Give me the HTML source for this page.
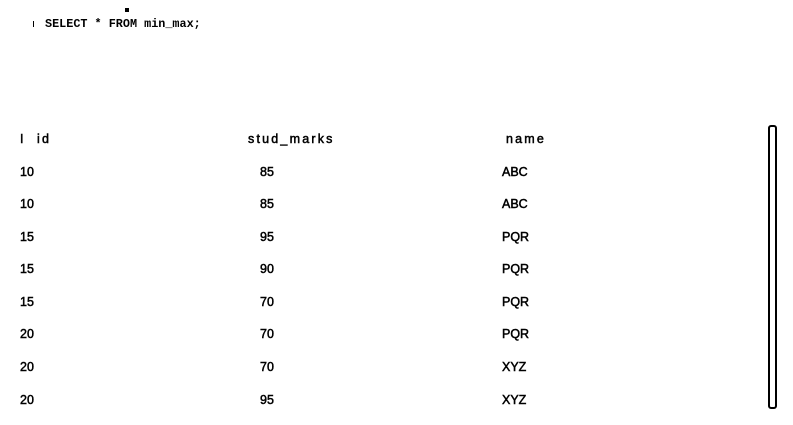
<!DOCTYPE html>
<html><head><style>
body{margin:0;width:793px;height:425px;background:#fff;position:relative;overflow:hidden;font-family:"Liberation Sans",sans-serif;color:#000}
.t{position:absolute;font-size:12.5px;line-height:14px;white-space:nowrap;-webkit-text-stroke:0.5px}
.h{letter-spacing:2.2px;font-size:12.5px}
.sql{position:absolute;left:45px;top:17px;font-family:"Liberation Mono",monospace;font-size:11.8px;font-weight:bold}
.bar{position:absolute;left:33px;top:21px;width:1px;height:6px;background:#000}
.dot{position:absolute;left:125px;top:8px;width:4px;height:4px;background:#000}
.sb{position:absolute;left:768px;top:125px;width:5px;height:280px;border:2px solid #000;border-radius:3px}
</style></head><body>
<div class="dot"></div>
<div class="bar"></div>
<div class="sql">SELECT * FROM min_max;</div>
<div class="t h" style="left:20px;top:132px">I</div><div class="t h" style="left:37px;top:132px">id</div>
<div class="t h" style="left:248px;top:132px">stud_marks</div>
<div class="t h" style="left:506px;top:132px">name</div>
<div class="t" style="left:20px;top:165px">10</div><div class="t" style="left:260px;top:165px">85</div><div class="t" style="left:502px;top:165px">ABC</div>
<div class="t" style="left:20px;top:197px">10</div><div class="t" style="left:260px;top:197px">85</div><div class="t" style="left:502px;top:197px">ABC</div>
<div class="t" style="left:20px;top:230px">15</div><div class="t" style="left:260px;top:230px">95</div><div class="t" style="left:502px;top:230px">PQR</div>
<div class="t" style="left:20px;top:262px">15</div><div class="t" style="left:260px;top:262px">90</div><div class="t" style="left:502px;top:262px">PQR</div>
<div class="t" style="left:20px;top:295px">15</div><div class="t" style="left:260px;top:295px">70</div><div class="t" style="left:502px;top:295px">PQR</div>
<div class="t" style="left:20px;top:327px">20</div><div class="t" style="left:260px;top:327px">70</div><div class="t" style="left:502px;top:327px">PQR</div>
<div class="t" style="left:20px;top:360px">20</div><div class="t" style="left:260px;top:360px">70</div><div class="t" style="left:502px;top:360px">XYZ</div>
<div class="t" style="left:20px;top:393px">20</div><div class="t" style="left:260px;top:393px">95</div><div class="t" style="left:502px;top:393px">XYZ</div>
<div class="sb"></div>
</body></html>
